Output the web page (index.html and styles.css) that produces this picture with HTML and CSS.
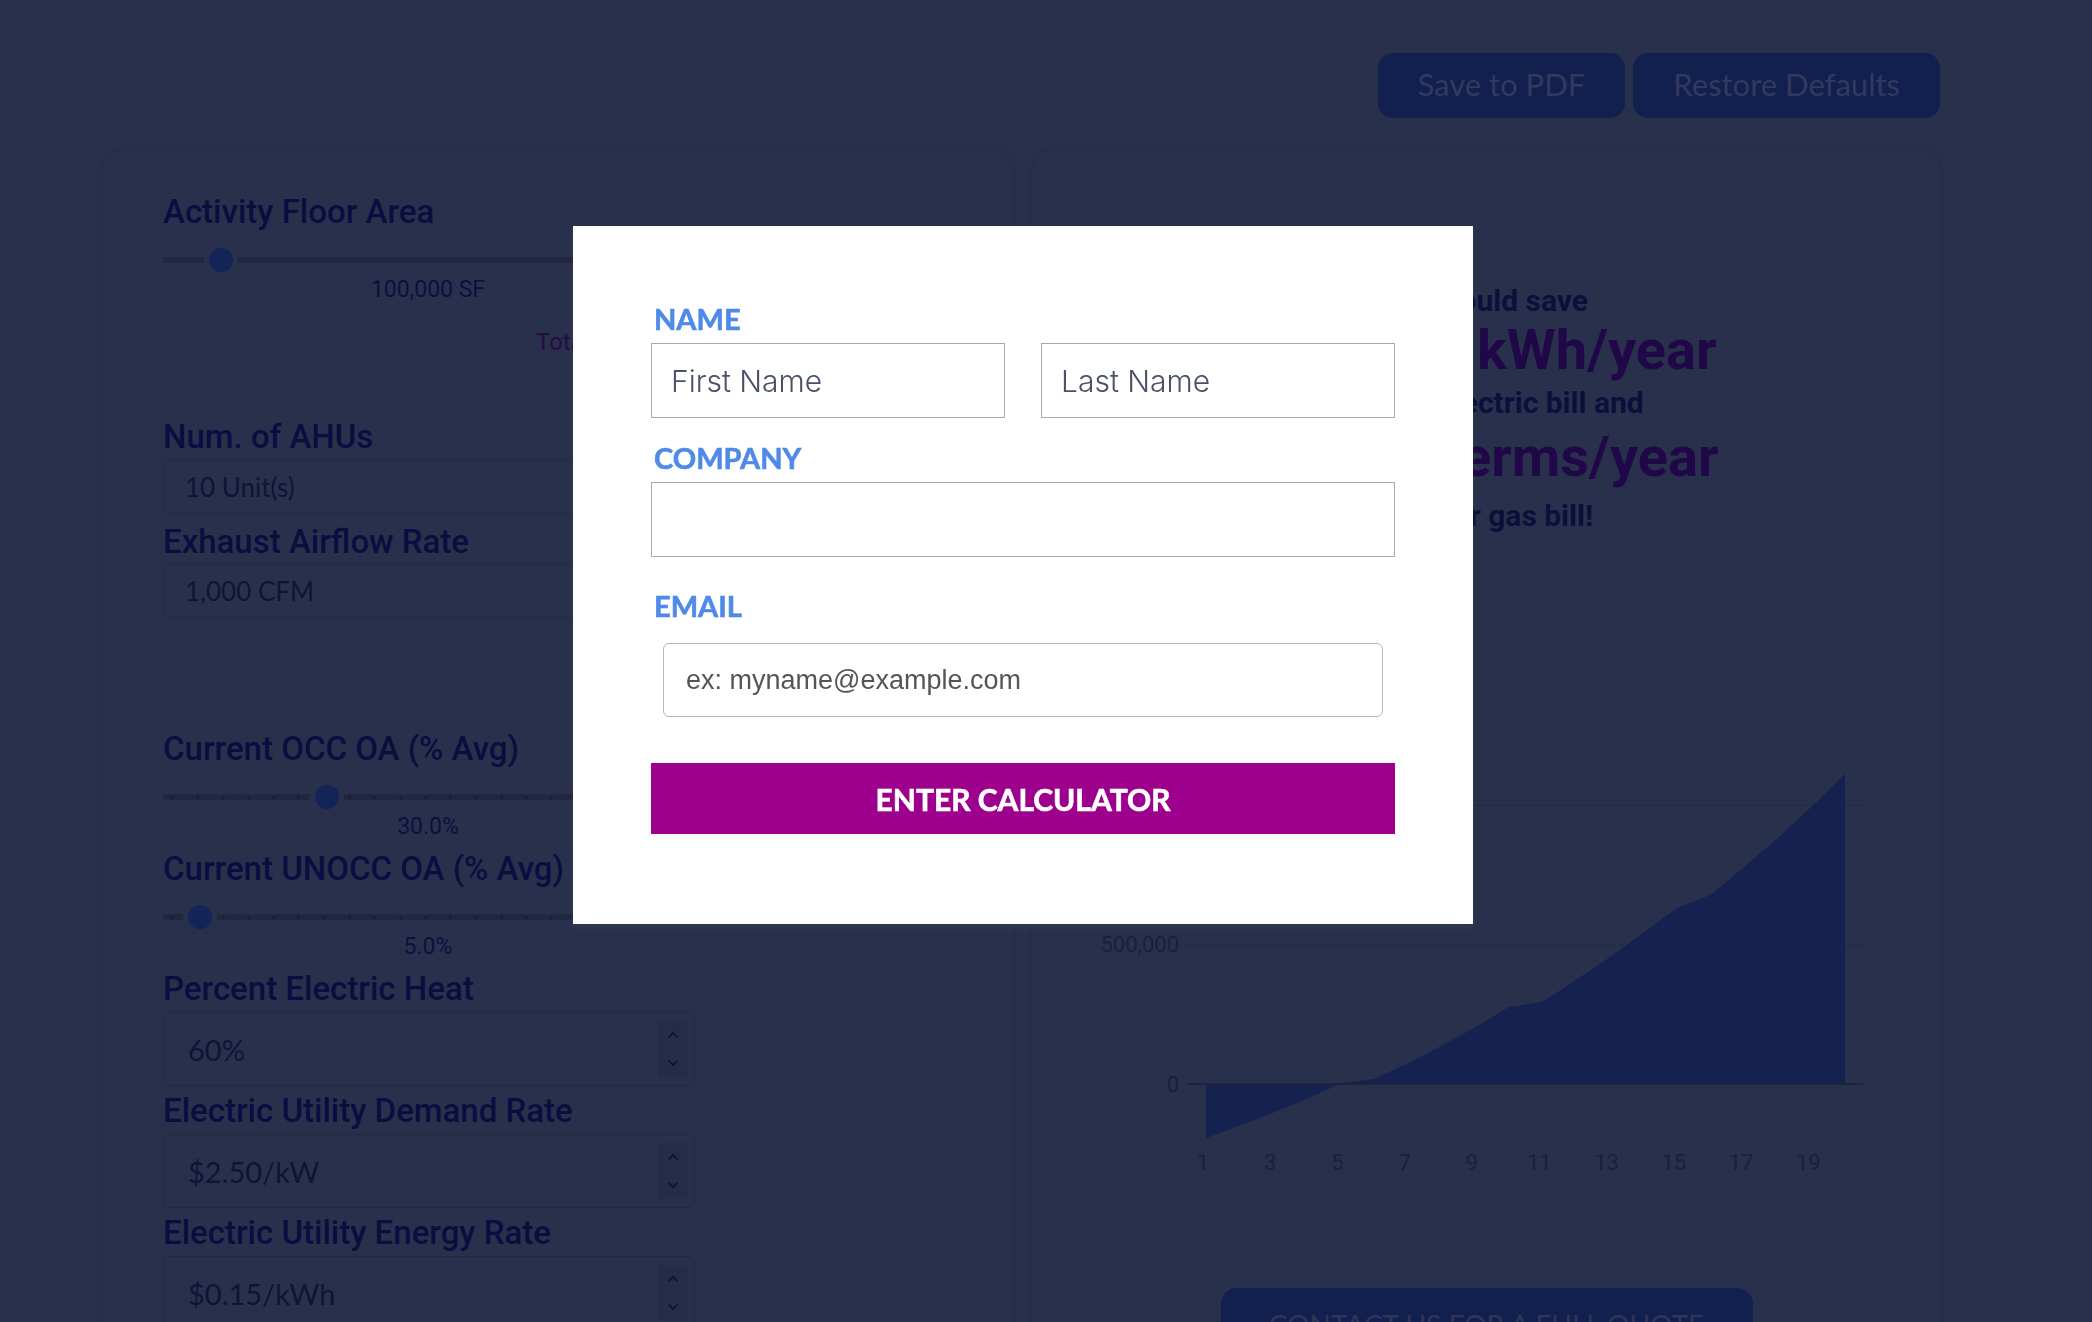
FILE: index.html
```html
<!DOCTYPE html>
<html lang="en">
<head>
<meta charset="utf-8">
<title>Energy Savings Calculator</title>
<link rel="stylesheet" href="styles.css">
</head>
<body>
<div class="page">
  <div class="toolbar">
    <button class="tool-btn">Save to PDF</button>
    <button class="tool-btn">Restore Defaults</button>
  </div>

  <div class="panels">
    <section class="card inputs">
      <h3 class="field-title">Activity Floor Area</h3>
      <div class="slider" style="--v: 0.0909">
        <div class="track"></div>
        <div class="thumb"></div>
      </div>
      <div class="slider-value">100,000 SF</div>
      <div class="total-note">Total Conditioned Area</div>

      <h3 class="field-title t-ahu">Num. of AHUs</h3>
      <div class="value-box small">10 Unit(s)</div>
      <h3 class="field-title t-exh">Exhaust Airflow Rate</h3>
      <div class="value-box small tight">1,000 CFM</div>

      <h3 class="field-title t-occ">Current OCC OA (% Avg)</h3>
      <div class="slider" style="--v: 0.30">
        <div class="track dotted">
          <i></i><i></i><i></i><i></i><i></i><i></i><i></i><i></i><i></i><i></i><i></i><i></i><i></i><i></i><i></i><i></i><i></i><i></i><i></i><i></i><i></i>
        </div>
        <div class="thumb"></div>
      </div>
      <div class="slider-value">30.0%</div>

      <h3 class="field-title t-after">Current UNOCC OA (% Avg)</h3>
      <div class="slider" style="--v: 0.05">
        <div class="track dotted">
          <i></i><i></i><i></i><i></i><i></i><i></i><i></i><i></i><i></i><i></i><i></i><i></i><i></i><i></i><i></i><i></i><i></i><i></i><i></i><i></i><i></i>
        </div>
        <div class="thumb"></div>
      </div>
      <div class="slider-value">5.0%</div>

      <h3 class="field-title t-after">Percent Electric Heat</h3>
      <div class="value-box large">
        <span>60%</span>
        <span class="spin">
          <svg width="12" height="8" viewBox="0 0 12 8"><polyline points="1.5,6.5 6,2 10.5,6.5" /></svg>
          <svg width="12" height="8" viewBox="0 0 12 8"><polyline points="1.5,1.5 6,6 10.5,1.5" /></svg>
        </span>
      </div>

      <h3 class="field-title t-box">Electric Utility Demand Rate</h3>
      <div class="value-box large">
        <span>$2.50/kW</span>
        <span class="spin">
          <svg width="12" height="8" viewBox="0 0 12 8"><polyline points="1.5,6.5 6,2 10.5,6.5" /></svg>
          <svg width="12" height="8" viewBox="0 0 12 8"><polyline points="1.5,1.5 6,6 10.5,1.5" /></svg>
        </span>
      </div>

      <h3 class="field-title t-box">Electric Utility Energy Rate</h3>
      <div class="value-box large">
        <span>$0.15/kWh</span>
        <span class="spin">
          <svg width="12" height="8" viewBox="0 0 12 8"><polyline points="1.5,6.5 6,2 10.5,6.5" /></svg>
          <svg width="12" height="8" viewBox="0 0 12 8"><polyline points="1.5,1.5 6,6 10.5,1.5" /></svg>
        </span>
      </div>
    </section>

    <section class="card results">
      <div class="summary">
        <div class="sum-line">You could save</div>
        <div class="sum-big">146,052 kWh/year</div>
        <div class="sum-line l3">on your electric bill and</div>
        <div class="sum-big l4">4,512 therms/year</div>
        <div class="sum-line l5">on your gas bill!</div>
      </div>

      <svg class="chart" width="906" height="650" viewBox="0 0 906 650">
        <g class="grid">
          <line x1="154" y1="244" x2="830" y2="244" />
          <line x1="154" y1="384" x2="830" y2="384" />
        </g>
        <path class="area" d="M173,523 L173,577 L206.6,564.7 L240.3,551.8 L273.9,537.8 L307.5,522.4 L341.2,518 L374.8,502.3 L408.4,484.9 L442,466.4 L475.7,446 L509.3,441 L542.9,419.1 L576.6,396.2 L610.2,372.1 L643.8,346.9 L677.5,334 L711.1,306 L744.7,276.9 L778.4,246.1 L812,213 L812,523 Z" />
        <line class="zero" x1="154" y1="523" x2="830" y2="523" />
        <g class="ylabels">
          <text x="146" y="251">1,000,000</text>
          <text x="146" y="391">500,000</text>
          <text x="146" y="531">0</text>
        </g>
        <g class="xlabels">
          <text x="170" y="609">1</text>
          <text x="237.3" y="609">3</text>
          <text x="304.5" y="609">5</text>
          <text x="371.8" y="609">7</text>
          <text x="439" y="609">9</text>
          <text x="506.3" y="609">11</text>
          <text x="573.6" y="609">13</text>
          <text x="640.8" y="609">15</text>
          <text x="708.1" y="609">17</text>
          <text x="775.3" y="609">19</text>
        </g>
      </svg>

      <div class="cta-row">
        <button class="cta">CONTACT US FOR A FULL QUOTE</button>
      </div>
    </section>
  </div>
</div>

<div class="overlay">
  <form class="modal">
    <label class="m-label">NAME</label>
    <div class="name-row">
      <input class="m-input" type="text" placeholder="First Name">
      <input class="m-input" type="text" placeholder="Last Name">
    </div>
    <label class="m-label gap-company">COMPANY</label>
    <input class="m-input full" type="text">
    <label class="m-label gap-email">EMAIL</label>
    <input class="email-input" type="email" placeholder="ex: myname@example.com">
    <button class="enter-btn" type="button">ENTER CALCULATOR</button>
  </form>
</div>
</body>
</html>
```

FILE: styles.css
```css
* { box-sizing: border-box; }

html, body {
  margin: 0;
  background: #29304b;
  font-family: Roboto, "Liberation Sans", sans-serif;
  overflow: hidden;
}

.page {
  width: 1940px;
  padding: 53px 0 0 103px;
}

.toolbar {
  display: flex;
  justify-content: flex-end;
  gap: 8px;
}

.tool-btn {
  height: 65px;
  padding: 0 40px 4px;
  border: none;
  border-radius: 15px;
  background: #122050;
  color: #33395d;
  font-family: Lato, sans-serif;
  font-size: 31px;
}

.panels {
  display: grid;
  grid-template-columns: 910px 907px;
  gap: 20px;
  margin-top: 32px;
}

.card {
  background: #29304b;
  border-radius: 20px;
  box-shadow: 0 0 5px rgba(12, 14, 34, 0.12);
  min-height: 1300px;
}

/* ---------- input column ---------- */
.inputs {
  padding: 43px 60px 0;
}

.field-title {
  margin: 0;
  font-size: 33px;
  line-height: 38px;
  font-weight: 500;
  color: #0a0d40;
}

.t-ahu { margin-top: 61px; }
.t-exh { margin-top: 9px; }
.t-occ { margin-top: 112px; }
.t-after { margin-top: 9px; }
.t-box { margin-top: 6px; }

.slider {
  position: relative;
  width: 530px;
  height: 24px;
  margin-top: 17px;
}

.track {
  position: absolute;
  left: 0;
  right: 0;
  top: 9px;
  height: 6px;
  border-radius: 3px;
  background: #21273e;
}

.track.dotted {
  display: flex;
  justify-content: space-between;
  align-items: center;
  padding: 0 13px 0 8px;
}

.track.dotted i {
  width: 3px;
  height: 3px;
  border-radius: 50%;
  background: #1a1e34;
}

.thumb {
  position: absolute;
  top: 0;
  left: calc((100% - 24px) * var(--v));
  width: 24px;
  height: 24px;
  border-radius: 50%;
  background: #132458;
  box-shadow: 0 0 0 5px #29304b;
}

.slider-value {
  width: 530px;
  margin-top: 4px;
  text-align: center;
  font-size: 23px;
  line-height: 28px;
  color: #0c1040;
}

.total-note {
  margin: 23px 0 0 373px;
  font-size: 24px;
  line-height: 30px;
  color: #260c46;
  white-space: nowrap;
}

.value-box {
  width: 532px;
  display: flex;
  align-items: center;
  border: 1px solid #232941;
  border-radius: 7px;
  font-family: Lato, sans-serif;
  color: #0f1437;
  margin-top: 3px;
}

.value-box.small {
  height: 55px;
  padding-left: 21px;
  font-size: 26px;
}

.value-box.tight { margin-top: 2px; }

.value-box.large {
  height: 74px;
  padding-left: 24px;
  font-size: 29px;
  margin-top: 4px;
}

.spin {
  margin-left: auto;
  margin-right: 6px;
  width: 30px;
  height: 56px;
  display: flex;
  flex-direction: column;
  justify-content: space-around;
  align-items: center;
  background: #262c47;
}

.spin svg polyline {
  fill: none;
  stroke: #0c1035;
  stroke-width: 1.6;
}

/* ---------- results column ---------- */
.results {
  padding-top: 131px;
}

.summary {
  text-align: center;
  font-weight: 700;
  white-space: nowrap;
}

.sum-line {
  font-size: 30px;
  line-height: 40px;
  color: #0c0f3c;
}

.sum-big {
  font-size: 56px;
  line-height: 58px;
  color: #200848;
}

.l3 { margin-top: 4px; }
.l4 { margin-top: 5px; }
.l5 { margin-top: 10px; }

.chart {
  display: block;
  margin-top: 25px;
}

.chart .grid line {
  stroke: #222841;
  stroke-width: 1.5;
  stroke-dasharray: 4 4;
}

.chart .zero {
  stroke: #1c2240;
  stroke-width: 2;
}

.chart .area {
  fill: #15214f;
}

.chart text {
  font-family: Roboto, sans-serif;
  font-size: 22px;
  fill: #1a1f41;
}

.chart .ylabels text { text-anchor: end; }
.chart .xlabels text { text-anchor: middle; }

.cta-row {
  display: flex;
  justify-content: center;
  margin-top: 77px;
}

.cta {
  width: 532px;
  height: 74px;
  padding: 0;
  border: none;
  border-radius: 16px;
  background: #122050;
  color: #2f3656;
  font-family: Lato, sans-serif;
  font-size: 28px;
}

/* ---------- modal ---------- */
.overlay {
  position: fixed;
  inset: 0;
}

.modal {
  position: absolute;
  left: 573px;
  top: 226px;
  width: 900px;
  height: 698px;
  padding: 75px 78px 0;
  background: #ffffff;
  box-shadow: 0 3px 8px rgba(255, 255, 255, 0.05);
}

.m-label {
  display: block;
  width: max-content;
  margin: 0 0 6px 3px;
  font-family: Lato, sans-serif;
  font-weight: 700;
  font-size: 29px;
  line-height: 36px;
  color: #4f8ae8;
  -webkit-text-stroke: 0.6px #4f8ae8;
}

.gap-company { margin-top: 22px; }
.gap-email { margin-top: 31px; margin-bottom: 19px; }

.name-row {
  display: grid;
  grid-template-columns: 1fr 1fr;
  gap: 36px;
}

.m-input {
  display: block;
  width: 100%;
  height: 75px;
  margin: 0;
  padding: 0 0 0 19px;
  border: 1px solid #a9a9ad;
  border-radius: 0;
  font-family: Inter, sans-serif;
  font-weight: 300;
  font-size: 30px;
  color: #4a5068;
  background: #fff;
}

.m-input::placeholder {
  color: #4a5068;
  opacity: 1;
}

.email-input {
  display: block;
  width: calc(100% - 24px);
  height: 74px;
  margin: 0 12px;
  padding: 0 0 0 22px;
  border: 1px solid #b3b8c4;
  border-radius: 6px;
  font-family: "Liberation Sans", Arial, sans-serif;
  font-size: 27px;
  color: #555555;
  background: #fff;
}

.email-input::placeholder {
  color: #555555;
  opacity: 1;
}

.enter-btn {
  display: block;
  width: 100%;
  height: 71px;
  margin-top: 46px;
  border: none;
  background: #9e008e;
  color: #ffffff;
  font-family: Lato, sans-serif;
  font-weight: 700;
  font-size: 30px;
  -webkit-text-stroke: 0.6px #ffffff;
}
```
